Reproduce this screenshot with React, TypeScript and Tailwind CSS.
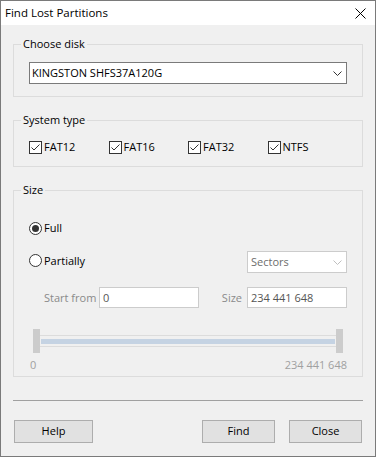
import React from "react";

const F = { fontFamily: '"Open Sans", "Noto Sans", sans-serif' };

function Check({ label }: { label: string }) {
  return (
    <div className="flex items-center w-[86px] h-[16px]">
      <svg width="13" height="13" viewBox="0 0 13 13" className="shrink-0">
        <rect x="0.5" y="0.5" width="12" height="12" fill="#fff" stroke="#333" />
        <path d="M2.5 6.5 L5 9 L10.5 3.5" fill="none" stroke="#333" strokeWidth="1" />
      </svg>
      <span className="ml-[2px] text-[11px] leading-4 text-black">{label}</span>
    </div>
  );
}

function Radio({ label, checked }: { label: string; checked?: boolean }) {
  return (
    <div className="flex items-center">
      <svg width="13" height="13" viewBox="0 0 13 13" className="shrink-0">
        <circle cx="6.5" cy="6.5" r="6" fill="#fff" stroke="#333" />
        {checked && <circle cx="6.5" cy="6.5" r="3.5" fill="#333" />}
      </svg>
      <span className="ml-[2px] text-[11px] leading-4 text-black">{label}</span>
    </div>
  );
}

function Chevron({ color }: { color: string }) {
  return (
    <svg width="9" height="5" viewBox="0 0 9 5">
      <path d="M0.5 0.5 L4.5 4.5 L8.5 0.5" fill="none" stroke={color} strokeWidth="1" />
    </svg>
  );
}

function Legend({ children }: { children: React.ReactNode }) {
  return (
    <legend className="ml-[7px] px-[2px] text-[11px] leading-4 text-black">{children}</legend>
  );
}

function Button({ label, w }: { label: string; w: string }) {
  return (
    <div
      className={`${w} h-[23px] bg-[#e1e1e1] border border-[#adadad] flex items-center justify-center text-[11px] text-black`}
    >
      {label}
    </div>
  );
}

export default function App() {
  return (
    <div
      style={F}
      className="w-[376px] h-[457px] border border-[#7a7a7a] bg-[#f0f0f0] flex flex-col box-border select-none"
    >
      {/* Title bar */}
      <div className="h-[24px] bg-white flex items-center justify-between pl-[4px] pr-[9px] shrink-0">
        <span className="text-[11.5px] leading-4 text-black">Find Lost Partitions</span>
        <svg width="11" height="11" viewBox="0 0 11 11">
          <path d="M0.5 0.5 L10.5 10.5 M10.5 0.5 L0.5 10.5" stroke="#000" strokeWidth="1" />
        </svg>
      </div>

      {/* Choose disk */}
      <fieldset className="mx-[12px] mt-[11px] border border-[#dcdcdc] p-0 min-w-0">
        <Legend>Choose disk</Legend>
        <div className="px-[15px] pt-[10px] pb-[12px]">
          <div className="h-[22px] border border-[#7a7a7a] bg-white flex items-center justify-between pl-[2px] pr-[4px]">
            <span className="text-[11px] leading-4 text-black">KINGSTON SHFS37A120G</span>
            <Chevron color="#333" />
          </div>
        </div>
      </fieldset>

      {/* System type */}
      <fieldset className="mx-[12px] mt-[15px] border border-[#dcdcdc] p-0 min-w-0">
        <Legend>System type</Legend>
        <div className="px-[15px] pt-[11px] pb-[11px] flex">
          <Check label="FAT12" />
          <Check label="FAT16" />
          <Check label="FAT32" />
          <Check label="NTFS" />
        </div>
      </fieldset>

      {/* Size */}
      <fieldset className="mx-[12px] mt-[15px] border border-[#dcdcdc] p-0 min-w-0">
        <Legend>Size</Legend>
        <div className="px-[15px] pt-[19px] pb-[3px] flex flex-col">
          <div className="h-[22px] flex items-center">
            <Radio label="Full" checked />
          </div>
          <div className="mt-[12px] h-[22px] flex items-center justify-between">
            <div className="-mt-[3px]">
              <Radio label="Partially" />
            </div>
            <div className="w-[100px] h-[22px] border border-[#cccccc] bg-white flex items-center justify-between pl-[3px] pr-[4px]">
              <span className="text-[11px] leading-4 text-[#6d6d6d]">Sectors</span>
              <Chevron color="#bfbfbf" />
            </div>
          </div>
          <div className="mt-[14px] h-[21px] flex items-center">
            <span className="ml-[15px] text-[11px] leading-4 text-[#8a8a8a] w-[55px]">Start from</span>
            <div className="w-[100px] h-[21px] border border-[#cccccc] bg-white flex items-center pl-[3px]">
              <span className="text-[11px] leading-4 text-[#555]">0</span>
            </div>
            <span className="ml-auto text-[11px] leading-4 text-[#8a8a8a] mr-[5px]">Size</span>
            <div className="w-[100px] h-[21px] border border-[#cccccc] bg-white flex items-center pl-[3px]">
              <span className="text-[11px] leading-4 text-[#555]">234 441 648</span>
            </div>
          </div>

          {/* slider */}
          <div className="mt-[21px] flex items-center h-[24px] pl-[4px] pr-[4px]">
            <div className="w-[7px] h-[24px] bg-[#cccccc] shrink-0" />
            <div className="flex-1 h-[12px] border-y border-[#dcdcdc] flex items-center px-[1px]">
              <div className="w-full h-[5px] bg-[#c5d3e3]" />
            </div>
            <div className="w-[7px] h-[24px] bg-[#cccccc] shrink-0" />
          </div>
          <div className="mt-[4px] h-[16px] flex justify-between text-[11px] leading-4 text-[#a0a0a0] pl-[1px]">
            <span>0</span>
            <span>234 441 648</span>
          </div>
        </div>
      </fieldset>

      {/* separator */}
      <div className="mx-[12px] mt-[23px] h-px bg-[#a0a0a0] shrink-0" />

      {/* buttons */}
      <div className="mt-[19px] px-[13px] flex items-center">
        <Button label="Help" w="w-[79px]" />
        <div className="ml-auto flex gap-[14px]">
          <Button label="Find" w="w-[73px]" />
          <Button label="Close" w="w-[73px]" />
        </div>
      </div>
    </div>
  );
}
